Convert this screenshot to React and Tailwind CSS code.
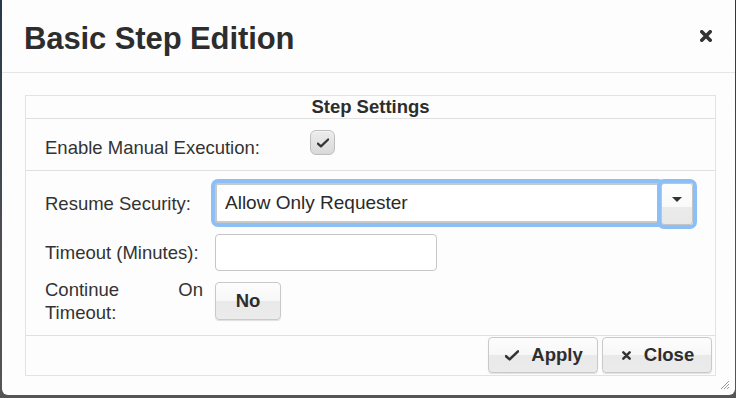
import React, { useState } from 'react';

const font = { fontFamily: '"Liberation Sans", Arial, Helvetica, sans-serif' };

// old jQuery-UI style button: white top half, grey bottom half
const btn =
  'flex items-center justify-center rounded-[4px] border border-[#c9c9c9] bg-[linear-gradient(#fdfdfd_0%,#f7f7f7_50%,#e9e9e9_50%,#ebebeb_100%)] shadow-[0_1px_1px_rgba(0,0,0,0.12)] text-[#2d2d2d] font-bold text-[18.5px]';

const CheckIcon = ({ className }) => (
  <svg viewBox="0 0 14 11" className={className}>
    <path d="M1 6.2 L4.6 9.4 L13 1.4" fill="none" stroke="#333" strokeWidth="2.6" strokeLinecap="round" strokeLinejoin="round" />
  </svg>
);

const XIcon = ({ className, w = 2.8 }) => (
  <svg viewBox="0 0 10 10" className={className}>
    <path d="M1.5 1.5 L8.5 8.5 M8.5 1.5 L1.5 8.5" fill="none" stroke="#333" strokeWidth={w} strokeLinecap="round" />
  </svg>
);

const App = () => {
  const [manual, setManual] = useState(true);
  const [onTimeout, setOnTimeout] = useState(false);

  return (
    <div style={font} className="w-[736px] h-[398px] bg-[linear-gradient(#27384a,#4d4f53_60%,#555)] pl-[2px] pb-[3px] pr-[1px]">
      <div className="relative h-full bg-[#fdfdfd] rounded-b-[6px] flex flex-col text-[#333]">
        {/* Header */}
        <div className="h-[73px] border-b border-[#e5e5e5] flex items-start justify-between pl-[22px] pr-[23px]">
          <h1 className="mt-[21px] text-[31px] leading-[36px] font-bold text-[#2d2d2d] tracking-[-0.1px]">Basic Step Edition</h1>
          <button className="mt-[30px] w-[12px] h-[12px]">
            <XIcon className="w-[12px] h-[12px]" w={3} />
          </button>
        </div>

        {/* Step settings table */}
        <div className="mt-[22px] ml-[23px] w-[691px] border border-[#e3e3e3] text-[18.5px]">
          <div className="h-[23px] leading-[22px] text-center font-bold text-[#2d2d2d] border-b border-[#e0e0e0]">Step Settings</div>

          <div className="h-[52px] border-b border-[#e0e0e0] flex items-start pl-[19px]">
            <span className="w-[265px] mt-[18px] leading-[22px]">Enable Manual Execution:</span>
            <button
              onClick={() => setManual(!manual)}
              className="mt-[11px] w-[25px] h-[25px] rounded-[6px] border border-[#bdbdbd] bg-[linear-gradient(#ececec,#d9d9d9)] shadow-[inset_0_1px_0_#f6f6f6] flex items-center justify-center"
            >
              {manual && <CheckIcon className="w-[12px] h-[10px]" />}
            </button>
          </div>

          <div className="border-b border-[#e0e0e0] pt-[12px] pb-[11px] pl-[19px] flex flex-col">
            <div className="h-[42px] flex items-center">
              <span className="w-[160px] mr-[10px] leading-[22px]">Resume Security:</span>
              <div className="relative flex items-start h-[42px]">
                <div className="w-[446px] h-[40px] rounded-[3px] border-2 border-[#c8c8c8] bg-white shadow-[0_0_0_4px_#8cbff6] flex items-center pl-[8px] text-[19px] text-[#2a2a2a]">
                  Allow Only Requester
                </div>
                <div className="w-[32px] h-[42px] rounded-[3px] border border-[#c4c4c4] bg-[linear-gradient(#fdfdfd_0%,#fafafa_58%,#ebebeb_58%,#e8e8e8_100%)] shadow-[0_0_0_4px_#8cbff6] flex items-start justify-center pt-[13px]">
                  <svg viewBox="0 0 10 5" className="w-[10px] h-[5px]">
                    <path d="M0 0 H10 L5 5 Z" fill="#333" />
                  </svg>
                </div>
              </div>
            </div>

            <div className="h-[37px] mt-[9px] flex items-center">
              <span className="w-[160px] mr-[10px] leading-[22px]">Timeout (Minutes):</span>
              <input className="w-[222px] h-[37px] rounded-[4px] border-[1.5px] border-[#c6c6c6] bg-white outline-none px-[8px] text-[18px]" />
            </div>

            <div className="h-[46px] mt-[7px] flex items-center">
              <span className="w-[158px] mr-[12px] leading-[23px] text-justify">Continue On Timeout:</span>
              <button onClick={() => setOnTimeout(!onTimeout)} className={`${btn} w-[66px] h-[38px]`}>
                {onTimeout ? 'Yes' : 'No'}
              </button>
            </div>
          </div>

          <div className="h-[39px] flex items-start justify-end gap-[4px] pt-[1px] pr-[3px]">
            <button className={`${btn} w-[110px] h-[36px] gap-[12px] pl-[2px]`}>
              <CheckIcon className="w-[14px] h-[11px]" />
              Apply
            </button>
            <button className={`${btn} w-[110px] h-[36px] gap-[13px] pl-[2px]`}>
              <XIcon className="w-[9px] h-[9px]" />
              Close
            </button>
          </div>
        </div>

        {/* resize grip */}
        <svg viewBox="0 0 12 12" className="absolute right-[5px] bottom-[5px] w-[12px] h-[12px]">
          <path d="M11 3 L3 11 M11 6 L6 11 M11 9 L9 11" stroke="#9a9a9a" strokeWidth="1" />
        </svg>
      </div>
    </div>
  );
};

export default App;
